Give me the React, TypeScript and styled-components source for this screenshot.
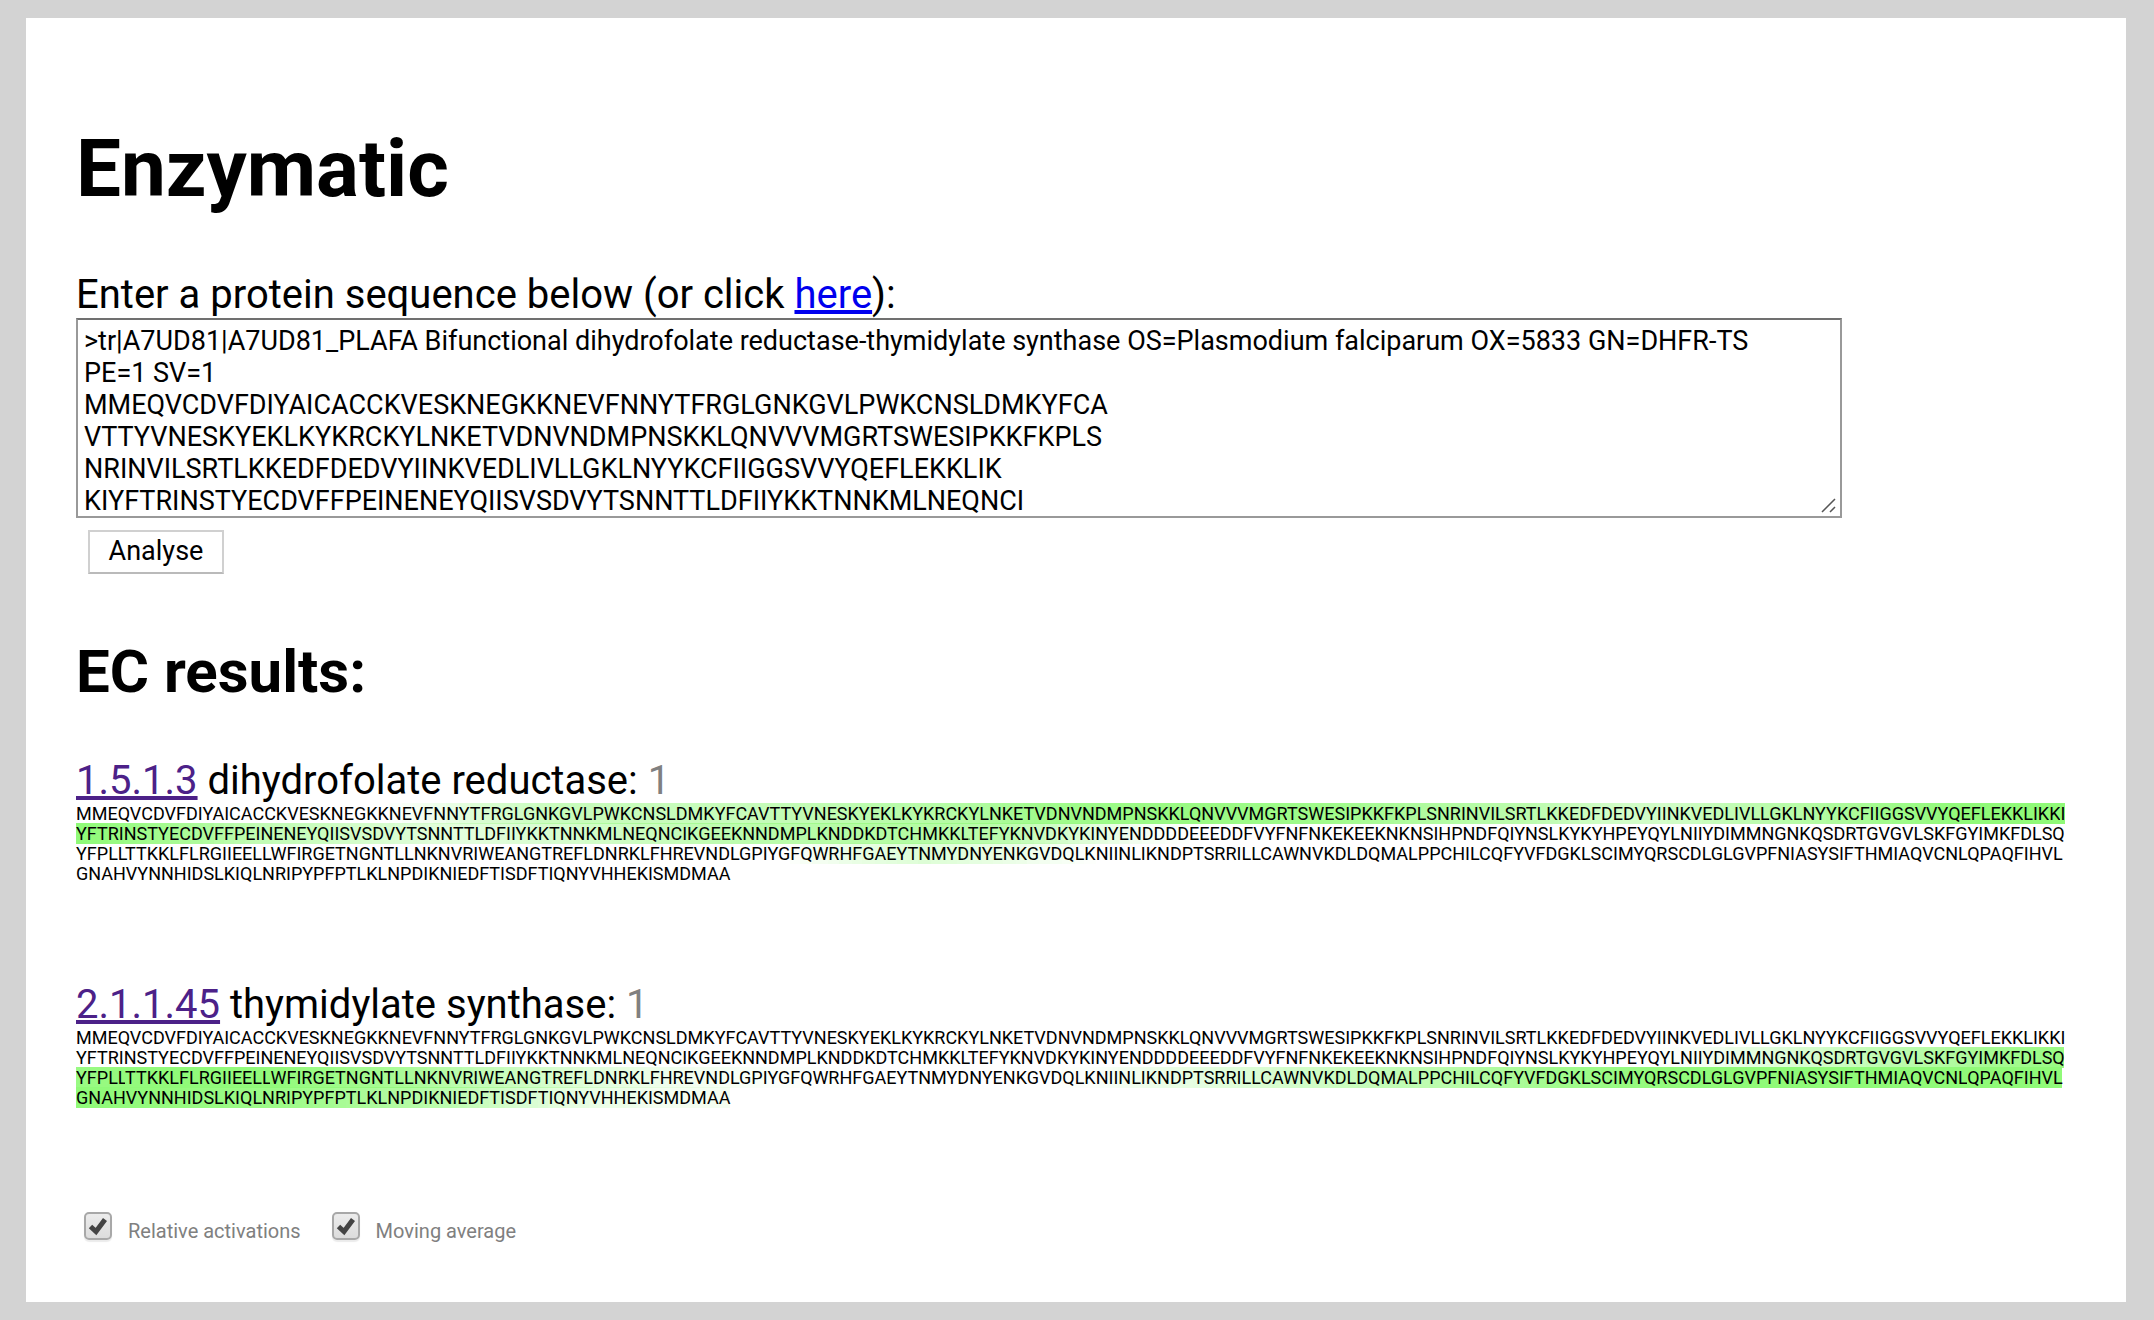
import React from "react";
import styled, { createGlobalStyle } from "styled-components";

const GlobalStyle = createGlobalStyle`
  html { background: #d3d3d3; }
  body {
    margin: 0;
    padding: 18px 28px 18px 26px;
    color: #000;
    font-family: Roboto, "Liberation Sans", sans-serif;
    font-size: 40px;
    line-height: 47px;
  }
`;

const Page = styled.main`
  padding: 104px 56px 52px 50px;
  background: #fff;
`;

const Title = styled.h1`
  margin: 0 0 55px;
  font-size: 80px;
  line-height: 94px;
  font-weight: 700;
`;

const SectionTitle = styled.h2`
  margin: 0 0 50px;
  font-size: 60px;
  line-height: 70px;
  font-weight: 700;
`;

const SequenceForm = styled.form`
  display: flex;
  flex-direction: column;
  align-items: flex-start;
  margin-bottom: 63px;
`;

const Link = styled.a<{ $visited?: boolean }>`
  color: ${(p) => (p.$visited ? "#4c2188" : "#0000ee")};
`;

const InputFrame = styled.div`
  position: relative;
  width: 100%;
  max-width: 1766px;
`;

const SequenceInput = styled.textarea`
  display: block;
  box-sizing: border-box;
  width: 100%;
  height: 200px;
  margin: 0;
  padding: 5px 32px 3px 6px;
  border: 2px solid #999;
  border-top-color: #707070;
  border-radius: 0;
  outline: none;
  resize: none;
  overflow: hidden;
  background: #fff;
  color: #000;
  font: 27px/32px Roboto, "Liberation Sans", sans-serif;
`;

const Grip = styled.svg`
  position: absolute;
  right: 6px;
  bottom: 5px;
`;

const AnalyseButton = styled.button`
  margin: 12px 0 0 12px;
  min-width: 136px;
  height: 44px;
  padding: 0 18px 2px;
  border: 2px solid #d0d0d0;
  border-bottom-color: #bababa;
  background: #fff;
  color: #000;
  font: 27px/32px Roboto, "Liberation Sans", sans-serif;
`;

const Result = styled.article`
  margin-bottom: 97px;
`;

const Score = styled.span`
  color: #808080;
`;

const Sequence = styled.div`
  font-size: 18px;
  line-height: 20px;
  word-break: break-all;
`;

const Options = styled.div`
  display: flex;
  gap: 23px;
  padding-top: 7px;
`;

const Option = styled.label`
  display: flex;
  align-items: flex-start;
  gap: 16px;
  color: #808080;
  font-size: 20px;
  line-height: 38px;
`;

const TickBox = styled.span`
  position: relative;
  display: block;
  width: 28px;
  height: 30px;
  margin-left: 8px;
`;

const Tick = styled.input`
  appearance: none;
  display: block;
  box-sizing: border-box;
  width: 28px;
  height: 28px;
  margin: 0;
  border: 2px solid #a8a8a8;
  border-radius: 5px;
  background: linear-gradient(#ececec, #dcdcdc);
  box-shadow: 0 2px 1px rgba(0, 0, 0, 0.08);

  &:not(:checked) + svg {
    display: none;
  }
`;

const TickMark = styled.svg`
  position: absolute;
  left: 4px;
  top: 4px;
  pointer-events: none;
`;

const FASTA = `>tr|A7UD81|A7UD81_PLAFA Bifunctional dihydrofolate reductase-thymidylate synthase OS=Plasmodium falciparum OX=5833 GN=DHFR-TS PE=1 SV=1
MMEQVCDVFDIYAICACCKVESKNEGKKNEVFNNYTFRGLGNKGVLPWKCNSLDMKYFCA
VTTYVNESKYEKLKYKRCKYLNKETVDNVNDMPNSKKLQNVVVMGRTSWESIPKKFKPLS
NRINVILSRTLKKEDFDEDVYIINKVEDLIVLLGKLNYYKCFIIGGSVVYQEFLEKKLIK
KIYFTRINSTYECDVFFPEINENEYQIISVSDVYTSNNTTLDFIIYKKTNNKMLNEQNCI`;

const PROTEIN =
  "MMEQVCDVFDIYAICACCKVESKNEGKKNEVFNNYTFRGLGNKGVLPWKCNSLDMKYFCAVTTYVNESKYEKLKYKRCKYLNKETVDNVNDMPNSKKLQNVVVMGRTSWESIPKKFKPLSNRINVILSRTLKKEDFDEDVYIINKVEDLIVLLGKLNYYKCFIIGGSVVYQEFLEKKLIKKI" +
  "YFTRINSTYECDVFFPEINENEYQIISVSDVYTSNNTTLDFIIYKKTNNKMLNEQNCIKGEEKNNDMPLKNDDKDTCHMKKLTEFYKNVDKYKINYENDDDDEEEDDFVYFNFNKEKEEKNKNSIHPNDFQIYNSLKYKYHPEYQYLNIIYDIMMNGNKQSDRTGVGVLSKFGYIMKFDLSQ" +
  "YFPLLTTKKLFLRGIIEELLWFIRGETNGNTLLNKNVRIWEANGTREFLDNRKLFHREVNDLGPIYGFQWRHFGAEYTNMYDNYENKGVDQLKNIINLIKNDPTSRRILLCAWNVKDLDQMALPPCHILCQFYVFDGKLSCIMYQRSCDLGLGVPFNIASYSIFTHMIAQVCNLQPAQFIHVL" +
  "GNAHVYNNHIDSLKIQLNRIPYPFPTLKLNPDIKNIEDFTISDFTIQNYVHHEKISMDMAA";

/* Activation level at the first residue of each motif, interpolated in between. */
type Anchor = [motif: string, level: number];

const REDUCTASE: Anchor[] = [
  ["KNEVFNN", 0], ["NNYTFR", 0.15], ["FRGLG", 0.35], ["GVLPW", 0.5], ["CAVTT", 0.5],
  ["KYLNKET", 0.68], ["VDNVN", 0.85], ["LQNVVV", 0.92], ["SIPKK", 0.85], ["PLSNR", 0.72],
  ["TLKKED", 0.6], ["DEDVYI", 0.42], ["INKVE", 0.4], ["LIVLL", 0.55], ["LNYYK", 0.65],
  ["GGSVV", 0.85], ["EFLEK", 1], ["YFTRIN", 1], ["ECDVFF", 0.8], ["EINENEY", 0.58],
  ["SVSDVY", 0.42], ["TTLDF", 0.25], ["YKKTN", 0.32], ["NEQNC", 0.45], ["EEKNND", 0.58],
  ["KNDDK", 0.66], ["CHMKK", 0.68], ["YKNVD", 0.6], ["KINYE", 0.3], ["DDDDEE", 0.08],
  ["EEEDD", 0], ["GFQWR", 0], ["FGAEY", 0.2], ["NMYDN", 0.3], ["ENKGVD", 0.2], ["NIINLI", 0],
];

const SYNTHASE: Anchor[] = [
  ["QYLNII", 0], ["YDIMM", 0.1], ["NKQSD", 0.32], ["VGVLS", 0.58], ["GYIMK", 0.72],
  ["FDLSQ", 0.85], ["YFPLL", 0.92], ["LFLRG", 1], ["WFIRG", 0.97], ["TNGNT", 0.87],
  ["LNKNV", 0.75], ["RIWEA", 0.58], ["NGTRE", 0.45], ["LDNRKL", 0.28], ["HREVN", 0.14],
  ["IYGFQ", 0.04], ["FGAEY", 0], ["VDQLKN", 0], ["NIINL", 0.05], ["DPTSR", 0.2],
  ["LLCAW", 0.3], ["KDLDQ", 0.45], ["ALPPC", 0.56], ["CQFYV", 0.7], ["GKLSC", 0.85],
  ["YQRSC", 0.95], ["GLGVP", 1], ["PAQFI", 1], ["GNAHV", 1], ["LKIQL", 0.92],
  ["PYPFP", 0.86], ["LNPDI", 0.72], ["IEDFT", 0.58], ["SDFTI", 0.38], ["NYVHH", 0.22],
  ["SMDMA", 0.1],
];

const RESULTS = [
  { ec: "1.5.1.3", name: "dihydrofolate reductase", score: 1, anchors: REDUCTASE },
  { ec: "2.1.1.45", name: "thymidylate synthase", score: 1, anchors: SYNTHASE },
];

function levelsFor(anchors: Anchor[]): number[] {
  const points = anchors.map(([motif, level]) => [PROTEIN.indexOf(motif), level]);
  return Array.from(PROTEIN, (_, i) => {
    const next = points.findIndex(([at]) => at > i);
    if (next === 0) return 0;
    if (next === -1) return points[points.length - 1][1];
    const [fromAt, fromLevel] = points[next - 1];
    const [toAt, toLevel] = points[next];
    return fromLevel + ((toLevel - fromLevel) * (i - fromAt)) / (toAt - fromAt);
  });
}

function ActivationMap({ anchors }: { anchors: Anchor[] }) {
  const levels = levelsFor(anchors);
  return (
    <Sequence>
      {Array.from(PROTEIN, (residue, i) => (
        <span
          key={i}
          style={levels[i] > 0 ? { backgroundColor: `rgba(144, 250, 120, ${levels[i].toFixed(2)})` } : undefined}
        >
          {residue}
        </span>
      ))}
    </Sequence>
  );
}

function OptionToggle({ id, label }: { id: string; label: string }) {
  return (
    <Option htmlFor={id}>
      <TickBox>
        <Tick id={id} type="checkbox" defaultChecked />
        <TickMark width="20" height="20" viewBox="0 0 20 20" aria-hidden="true">
          <path d="M2.5 10.5 L8 15.5 L17 3.5" fill="none" stroke="#444" strokeWidth="5" />
        </TickMark>
      </TickBox>
      {label}
    </Option>
  );
}

export default function App() {
  return (
    <>
      <GlobalStyle />
      <Page>
        <Title>Enzymatic</Title>
        <SequenceForm onSubmit={(e) => e.preventDefault()}>
          <label htmlFor="sequence">
            Enter a protein sequence below (or click <Link href="#example">here</Link>):
          </label>
          <InputFrame>
            <SequenceInput id="sequence" defaultValue={FASTA} spellCheck={false} />
            <Grip width="15" height="15" viewBox="0 0 15 15" aria-hidden="true">
              <path d="M1 14 L14 1 M9 14 L14 9" fill="none" stroke="#555" strokeWidth="1.5" />
            </Grip>
          </InputFrame>
          <AnalyseButton type="submit">Analyse</AnalyseButton>
        </SequenceForm>
        <SectionTitle>EC results:</SectionTitle>
        {RESULTS.map((r) => (
          <Result key={r.ec}>
            <div>
              <Link $visited href={`#${r.ec}`}>{r.ec}</Link> {r.name}: <Score>{r.score}</Score>
            </div>
            <ActivationMap anchors={r.anchors} />
          </Result>
        ))}
        <Options>
          <OptionToggle id="relative" label="Relative activations" />
          <OptionToggle id="moving" label="Moving average" />
        </Options>
      </Page>
    </>
  );
}
